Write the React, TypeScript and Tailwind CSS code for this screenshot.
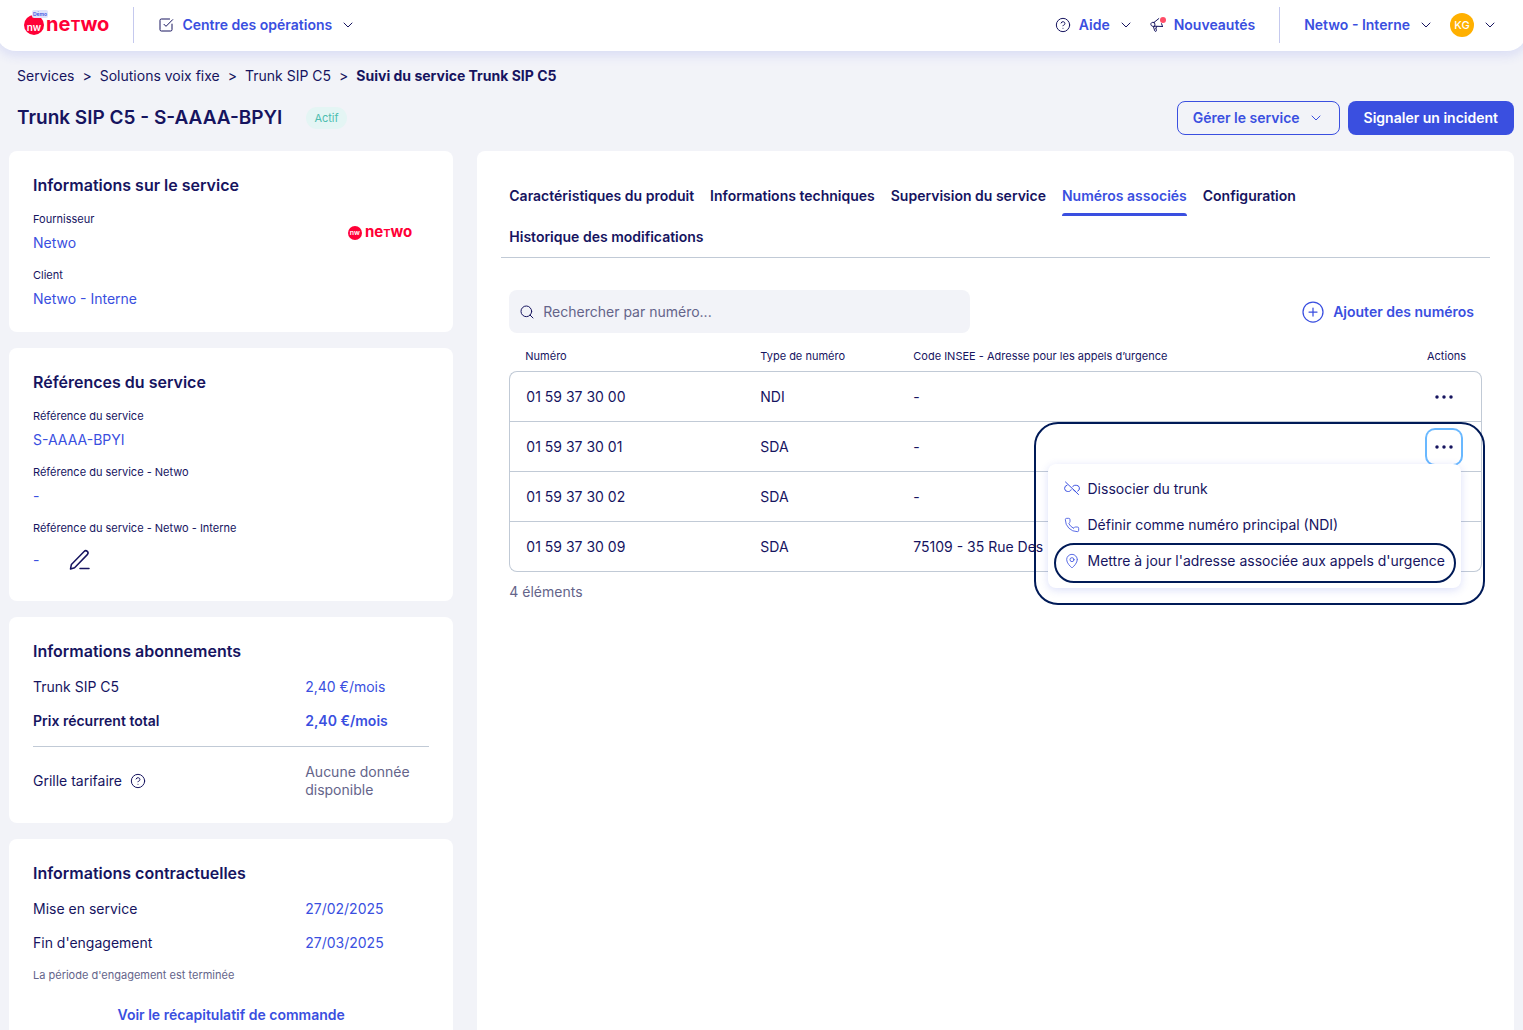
import { ReactNode } from 'react';
import {
  ChevronDown,
  CircleHelp,
  CirclePlus,
  MapPin,
  Phone,
  Search,
  SquareCheckBig,
} from 'lucide-react';

const TABS = [
  'Caractéristiques du produit',
  'Informations techniques',
  'Supervision du service',
  'Numéros associés',
  'Configuration',
  'Historique des modifications',
];

const NUMBERS = [
  { number: '01 59 37 30 00', type: 'NDI', address: '-' },
  { number: '01 59 37 30 01', type: 'SDA', address: '-' },
  { number: '01 59 37 30 02', type: 'SDA', address: '-' },
  { number: '01 59 37 30 09', type: 'SDA', address: '75109 - 35 Rue Des' },
];

const ACTIVE_TAB = 'Numéros associés';
const OPEN_ROW = '01 59 37 30 01';

function MegaphoneIcon() {
  return (
    <svg width="16" height="16" viewBox="0 0 16 16" fill="none" stroke="currentColor" strokeLinecap="round" strokeLinejoin="round" className="shrink-0 text-[#16145f]">
      <path d="M4 5.400 8.800 1.600M4 5.400C2 4.800.6 6 .9 7.600c.3 1.500 1.900 2.200 3.700 1.600M4 5.400c1 .9 1.300 2.400.6 3.800M4.600 9.200l7.900.3M12.500 9.500l-.9-2.800M3.400 9.600l1.300 4.200c.4 1 1.900.7 1.700-.4l-.5-2.200M5.900 11.200l1-1.800" />
      <circle cx="13" cy="3" r="3" fill="#ff4d67" stroke="none" />
    </svg>
  );
}

function UnlinkIcon() {
  return (
    <svg width="16" height="16" viewBox="0 0 16 16" fill="none" stroke="currentColor" strokeLinecap="round" strokeLinejoin="round">
      <path d="M1.500 1 14.500 13.500" />
      <path d="M3 4.200A3.200 3.200 0 0 0 3.700 10.500h.8c1.200 0 2.200-.7 2.600-1.700" />
      <path d="M8.600 5.800c.6-1 1.400-1.500 2.500-1.500h1.200a3.100 3.100 0 0 1 1.400 5.900" />
      <path d="M9.700 8.800c.4.900 1 1.400 1.900 1.600" />
    </svg>
  );
}

function PenIcon() {
  return (
    <svg width="24" height="24" viewBox="0 0 24 24" fill="none" stroke="currentColor" strokeWidth="1.5" strokeLinecap="round" strokeLinejoin="round">
      <path d="M2.500 21l.9-4.600L16.100 3.400c.9-.9 2.300-.9 3.200 0s.9 2.300 0 3.200L6.600 19.700z" />
      <path d="M12 20.500h9" />
    </svg>
  );
}

function DotsIcon() {
  return (
    <svg width="20" height="20" viewBox="0 0 20 20" fill="currentColor">
      <circle cx="3" cy="10" r="1.75" />
      <circle cx="10" cy="10" r="1.75" />
      <circle cx="17" cy="10" r="1.75" />
    </svg>
  );
}

function Chevron() {
  return <ChevronDown size={16} strokeWidth={1.5} className="shrink-0 text-[#16145f]" />;
}

function Card({ title, children }: { title: string; children: ReactNode }) {
  return (
    <section className="rounded-lg bg-white p-6">
      <h2 className="mb-4 text-base leading-[21px] font-semibold">{title}</h2>
      {children}
    </section>
  );
}

function Field({ label, children }: { label: string; children: ReactNode }) {
  return (
    <div className="flex flex-col gap-2">
      <dt className="text-[11px] leading-[14px]">{label}</dt>
      <dd className="text-[#3a4fe0]">{children}</dd>
    </div>
  );
}

function Row({ label, value, bold }: { label: string; value: string; bold?: boolean }) {
  return (
    <div className={`grid grid-cols-[2fr_1fr] gap-6 ${bold ? 'font-semibold' : ''}`}>
      <dt>{label}</dt>
      <dd className="text-[#3a4fe0]">{value}</dd>
    </div>
  );
}

function Header() {
  return (
    // slightly wider than the page so the rounded corners run off its edges
    <header className="relative z-10 -mx-1 flex h-[51px] shrink-0 items-center justify-between rounded-b-[20px] bg-white px-7 pb-px font-semibold text-[#3a4fe0] shadow-[0_4px_12px_rgba(58,79,224,0.14)]">
      <div className="flex items-center gap-6">
        <a href="#" className="relative flex items-center gap-[2px] text-[#ff0036]">
          <span className="flex size-5 items-center justify-center rounded-full bg-[#ff0036] pt-1 text-[10px] leading-none text-white">nw</span>
          <span className="text-[20px] leading-5 font-bold">
            ne<span className="text-[15px] uppercase">t</span>wo
          </span>
          <span className="absolute -top-1 left-2 rounded-[2px] bg-[#e0e4fb] px-px text-[5px] leading-[8px] text-[#3a4fe0]">Démo</span>
        </a>
        <div className="h-9 w-px bg-[#c5c9ee]" />
        <button className="flex items-center gap-2">
          <SquareCheckBig size={16} strokeWidth={1.5} className="text-[#16145f]" />
          Centre des opérations
          <Chevron />
        </button>
      </div>

      <div className="flex items-center gap-6 pr-px">
        <div className="flex items-center gap-4">
          <button className="flex items-center gap-2">
            <CircleHelp size={16} strokeWidth={1.5} className="text-[#16145f]" />
            Aide
            <Chevron />
          </button>
          <a href="#" className="flex items-center gap-2">
            <MegaphoneIcon />
            Nouveautés
          </a>
        </div>
        <div className="h-9 w-px bg-[#c5c9ee]" />
        <div className="flex items-center gap-4">
          <button className="flex items-center gap-2">
            Netwo - Interne
            <Chevron />
          </button>
          <button className="flex items-center gap-2">
            <span className="flex size-6 items-center justify-center rounded-full bg-[#ffb000] text-[11px] font-medium text-white">KG</span>
            <Chevron />
          </button>
        </div>
      </div>
    </header>
  );
}

function Breadcrumb() {
  return (
    <nav className="flex gap-2 px-2 pt-4">
      <a href="#">Services</a>
      <span>&gt;</span>
      <a href="#">Solutions voix fixe</a>
      <span>&gt;</span>
      <a href="#">Trunk SIP C5</a>
      <span>&gt;</span>
      <span className="font-bold">Suivi du service Trunk SIP C5</span>
    </nav>
  );
}

function Sidebar() {
  return (
    <aside className="flex flex-col gap-4">
      <Card title="Informations sur le service">
        <div className="flex items-start justify-between">
          <dl className="flex flex-col gap-4">
            <Field label="Fournisseur">
              <a href="#">Netwo</a>
            </Field>
            <Field label="Client">
              <a href="#">Netwo - Interne</a>
            </Field>
          </dl>
          <div className="mt-3 mr-[17px] flex items-center gap-[3px] font-bold text-[#ff0036]">
            <span className="flex size-[14px] items-center justify-center rounded-full bg-[#ff0036] text-[7px] leading-none font-semibold text-white">nw</span>
            <span className="text-[15px] leading-4">
              ne<span className="text-[11px] uppercase">t</span>wo
            </span>
          </div>
        </div>
      </Card>

      <Card title="Références du service">
        <dl className="flex flex-col gap-4">
          <Field label="Référence du service">S-AAAA-BPYI</Field>
          <Field label="Référence du service - Netwo">-</Field>
          <Field label="Référence du service - Netwo - Interne">
            <span className="flex items-center gap-6">
              -
              <button aria-label="Modifier la référence" className="flex size-[34px] items-center justify-center text-[#16145f]">
                <PenIcon />
              </button>
            </span>
          </Field>
        </dl>
      </Card>

      <Card title="Informations abonnements">
        <dl className="flex flex-col gap-4">
          <Row label="Trunk SIP C5" value="2,40 €/mois" />
          <Row label="Prix récurrent total" value="2,40 €/mois" bold />
          <div className="grid grid-cols-[2fr_1fr] items-center gap-6 border-t border-[#c1cad6] pt-4">
            <dt className="flex items-center gap-2">
              Grille tarifaire
              <CircleHelp size={16} strokeWidth={1.5} />
            </dt>
            <dd className="text-[#64648a]">Aucune donnée disponible</dd>
          </div>
        </dl>
      </Card>

      <Card title="Informations contractuelles">
        <dl className="flex flex-col gap-4">
          <Row label="Mise en service" value="27/02/2025" />
          <Row label="Fin d'engagement" value="27/03/2025" />
        </dl>
        <p className="mt-4 text-[11px] leading-[14px] text-[#64648a]">La période d'engagement est terminée</p>
        <a href="#" className="mt-4 flex h-[34px] items-center justify-center font-semibold text-[#3a4fe0]">
          Voir le récapitulatif de commande
        </a>
      </Card>
    </aside>
  );
}

function Tabs() {
  return (
    <div role="tablist" className="flex flex-wrap gap-x-4 border-b border-[#c1cad6] px-2">
      {TABS.map((tab) => {
        const active = tab === ACTIVE_TAB;
        return (
          <button key={tab} role="tab" aria-selected={active} className={`flex flex-col gap-2 pt-3 font-semibold ${active ? 'text-[#3a4fe0]' : ''}`}>
            {tab}
            <span className={`h-[3px] w-full rounded-t-[3px] ${active ? 'bg-[#3a4fe0]' : ''}`} />
          </button>
        );
      })}
    </div>
  );
}

function RowMenu() {
  return (
    <>
      <div className="absolute top-full right-0 z-10 flex flex-col rounded-lg bg-white pt-[7px] pb-[9px] whitespace-nowrap shadow-[0_2px_8px_rgba(58,79,224,0.18)]">
        <button className="flex h-9 items-center gap-2 px-4">
          <span className="text-[#3a4fe0]"><UnlinkIcon /></span>
          Dissocier du trunk
        </button>
        <button className="flex h-9 items-center gap-2 px-4">
          <Phone size={16} strokeWidth={1.25} className="text-[#3a4fe0]" />
          Définir comme numéro principal (NDI)
        </button>
        <button className="flex h-9 items-center gap-2 px-4">
          <MapPin size={16} strokeWidth={1.25} className="text-[#3a4fe0]" />
          Mettre à jour l'adresse associée aux appels d'urgence
        </button>
        {/* highlight around the emergency address entry */}
        <div className="pointer-events-none absolute right-[5px] bottom-[5px] left-[6px] h-10 rounded-[20px] border-2 border-[#001a57]" />
      </div>
      <div className="pointer-events-none absolute -top-2 -right-6 z-20 h-[183px] w-[451px] rounded-[24px] border-2 border-[#001a57]" />
    </>
  );
}

function NumbersTable() {
  return (
    <table className="mt-4 w-full table-fixed border-separate border-spacing-0 text-left">
      <colgroup>
        <col className="w-[235px]" />
        <col className="w-[153px]" />
        <col />
        <col className="w-[71px]" />
      </colgroup>
      <thead className="text-[11px] leading-[14px]">
        <tr>
          <th className="px-4 pt-0 pb-2 font-normal">Numéro</th>
          <th className="px-4 pt-0 pb-2 font-normal">Type de numéro</th>
          <th className="px-4 pt-0 pb-2 font-normal">Code INSEE - Adresse pour les appels d’urgence</th>
          <th className="px-4 pt-0 pb-2 font-normal">Actions</th>
        </tr>
      </thead>
      <tbody className="[&_td]:border-b [&_td]:border-[#c1cad6] [&_td]:px-4 [&_td:first-child]:border-l [&_td:last-child]:border-r [&_tr:first-child_td]:border-t [&_tr:first-child_td:first-child]:rounded-tl-lg [&_tr:first-child_td:last-child]:rounded-tr-lg [&_tr:last-child_td:first-child]:rounded-bl-lg [&_tr:last-child_td:last-child]:rounded-br-lg">
        {NUMBERS.map((row, i) => {
          const open = row.number === OPEN_ROW;
          return (
            <tr key={row.number} className={i === 0 ? 'h-[51px]' : 'h-[50px]'}>
              <td>{row.number}</td>
              <td>{row.type}</td>
              <td>{row.address}</td>
              <td>
                <div className="relative size-[34px]">
                  <button
                    aria-label="Actions"
                    className={`flex size-full items-center justify-center rounded-lg ${open ? 'ring-2 ring-[#69b8ff]' : ''}`}
                  >
                    <DotsIcon />
                  </button>
                  {open && <RowMenu />}
                </div>
              </td>
            </tr>
          );
        })}
      </tbody>
    </table>
  );
}

export default function App() {
  return (
    <div className="flex h-screen flex-col overflow-hidden bg-[#f2f3f8] font-['Inter',sans-serif] text-[14px] leading-[18px] text-[#16145f]">
      <Header />
      <main className="flex-1 overflow-y-auto px-[9px] pb-4 [scrollbar-width:none]">
        <Breadcrumb />
        <div className="flex items-center justify-between py-4 pl-2">
          <div className="flex items-center gap-6">
            <h1 className="text-[19px] leading-6 font-semibold">Trunk SIP C5 - S-AAAA-BPYI</h1>
            <span className="rounded-full bg-[#e4f5f4] px-2 py-[2px] text-[11px] text-[#4dbdb0]">Actif</span>
          </div>
          <div className="flex gap-2">
            <button className="flex h-[34px] items-center gap-2 rounded-lg border border-[#3a4fe0] px-[15px] font-semibold text-[#3a4fe0]">
              Gérer le service
              <ChevronDown size={16} strokeWidth={1.5} />
            </button>
            <button className="h-[34px] rounded-lg bg-[#3a4fe0] px-4 font-semibold text-white">Signaler un incident</button>
          </div>
        </div>

        <div className="grid grid-cols-[3fr_7fr] gap-6">
          <Sidebar />
          <section className="min-w-0 rounded-lg bg-white p-6">
            <Tabs />
            <div className="px-2 pt-8">
              <div className="flex items-center justify-between">
                <label className="flex h-[43px] w-full max-w-[461px] items-center gap-2 rounded-lg bg-[#f2f3f8] px-[10px]">
                  <Search size={16} strokeWidth={1.5} className="shrink-0" />
                  <input
                    type="text"
                    aria-label="Rechercher par numéro"
                    placeholder="Rechercher par numéro..."
                    className="w-full bg-transparent outline-none placeholder:text-[#64648a]"
                  />
                </label>
                <button className="flex items-center gap-2 px-2 font-semibold text-[#3a4fe0]">
                  <CirclePlus size={24} strokeWidth={1.25} />
                  Ajouter des numéros
                </button>
              </div>
              <NumbersTable />
              <p className="mt-[11px] text-[#64648a]">4 éléments</p>
            </div>
          </section>
        </div>
      </main>
    </div>
  );
}
